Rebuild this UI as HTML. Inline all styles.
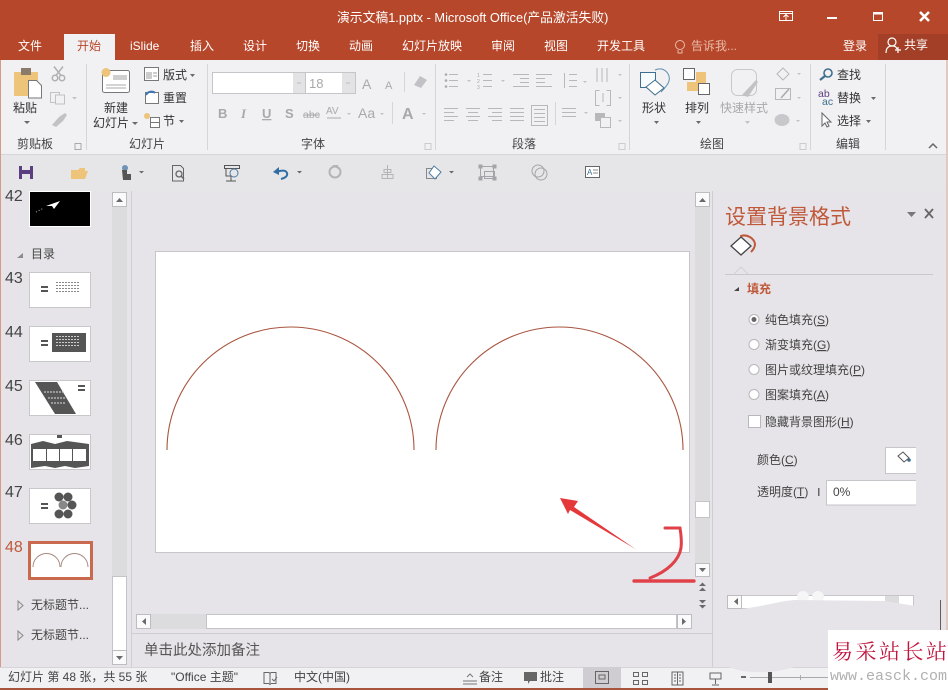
<!DOCTYPE html>
<html><head><meta charset="utf-8">
<style>
html,body{margin:0;padding:0;background:#e6e4e8;width:948px;height:690px;overflow:hidden}
svg{display:block}
text{font-family:"Liberation Sans","Noto Sans CJK SC",sans-serif;fill:#444;font-size:12px}
.w{fill:#fff}.g{fill:#a9a8ab}.d{fill:#555}
.l{stroke:#a5a4a8;stroke-width:1;fill:none}
.k{stroke:#7a797d;stroke-width:1;fill:none}
.b{fill:#fafafb;stroke:#bdbcc0;stroke-width:1}
.a{fill:#6a696d}
</style></head><body>
<svg width="948" height="690" viewBox="0 0 948 690" xmlns="http://www.w3.org/2000/svg">
<!-- backgrounds -->
<rect width="948" height="690" fill="#e6e4e8"/>
<rect width="948" height="60" fill="#b7472a"/>
<rect y="60" width="948" height="94" fill="#f1f0f3"/>
<rect y="154" width="948" height="1" fill="#d6d4d8"/>
<rect y="155" width="948" height="36" fill="#e6e5e8"/>
<rect x="64" y="34" width="51" height="26" fill="#f1f0f3"/>
<rect x="878" y="34" width="70" height="26" fill="#a33f26"/>
<rect x="0" y="60" width="1" height="630" fill="#d89a85"/>
<rect x="946" y="60" width="2" height="570" fill="#e2c9c0"/>
<!-- title -->
<text class="w" x="337" y="22" style="font-size:12.800px">演示文稿1.pptx - Microsoft Office(产品激活失败)</text>
<!-- window buttons -->
<g stroke="#fff" fill="none"><rect x="779.500" y="11.500" width="13" height="9"/><path d="M779 13.500h14M786 20v-5M783.500 17l2.500-2.500 2.500 2.500"/>
<path d="M827 18h10" stroke-width="2"/><rect x="873.500" y="12.500" width="9" height="8"/><path d="M873 13.500h10" stroke-width="2"/><path d="M920 12l9 9M929 12l-9 9" stroke-width="2.600"/></g>
<!-- tabs -->
<g style="font-size:12px">
<text class="w" x="18" y="50">文件</text><text x="77" y="50" style="fill:#b7472a">开始</text>
<text class="w" x="130" y="50">iSlide</text><text class="w" x="190" y="50">插入</text><text class="w" x="243" y="50">设计</text>
<text class="w" x="296" y="50">切换</text><text class="w" x="349" y="50">动画</text><text class="w" x="402" y="50">幻灯片放映</text>
<text class="w" x="491" y="50">审阅</text><text class="w" x="544" y="50">视图</text><text class="w" x="597" y="50">开发工具</text>
<text x="691" y="50" style="fill:#e8b9a8">告诉我...</text><text class="w" x="843" y="50">登录</text><text class="w" x="904" y="49">共享</text></g>
<g stroke="#e8b9a8" fill="none"><circle cx="680" cy="45" r="4.500"/><path d="M678 50v3h4v-3"/></g>
<g stroke="#fff" fill="none" stroke-width="1.200"><circle cx="892" cy="42" r="4"/><path d="M886 53c0-5 2-7 6-7s4 1 5 3M895 50h6M898 47v6"/></g>
<!-- clipboard -->
<rect x="14" y="72" width="24" height="24" fill="#eec47a"/><rect x="21" y="68" width="10" height="7" fill="#8a7a6a"/>
<path d="M28.500 80.500h8l5 5v12.500h-13z" fill="#fff" stroke="#777"/>
<text x="13" y="112" style="font-size:12px;fill:#333">粘贴</text><path d="M24 121h6l-3 3z" class="a"/>
<g fill="none" stroke="#b0afb3" stroke-width="1.500"><circle cx="55" cy="78" r="2.700"/><circle cx="62" cy="78" r="2.700"/><path d="M56 75.500l7-9M61 75.500l-7-9"/></g>
<g fill="none" stroke="#c2c1c5"><rect x="50.500" y="92.500" width="9" height="10"/><rect x="55.500" y="95" width="9" height="9" fill="#f1f0f3"/></g><path d="M72 97h5l-2.500 2.500z" fill="#c2c1c5"/>
<path d="M52 125l7-8 6-4 2 2-4 6-7 6z" fill="#c2c1c5"/>
<text x="17" y="148" style="font-size:12px">剪贴板</text><rect x="75" y="143.500" width="6" height="6" fill="none" stroke="#aaa"/>
<rect x="86" y="64" width="1" height="86" fill="#d6d4d8"/>
<!-- new slide -->
<rect x="102.500" y="70.500" width="27" height="22" rx="2" fill="#fff" stroke="#777"/><rect x="113" y="75" width="14" height="5" fill="#cfcfcf"/>
<path d="M106 85h20M106 88h20" stroke="#aaa"/><circle cx="106" cy="72.500" r="4.500" fill="#eec47a"/>
<text x="104" y="112" style="font-size:12px;fill:#333">新建</text><text x="93" y="127" style="font-size:12px;fill:#333">幻灯片</text><path d="M132 122h6l-3 3z" class="a"/>
<rect x="144.500" y="67.500" width="14" height="13" fill="#fff" stroke="#777"/><rect x="146" y="72" width="6" height="7" fill="#ccc"/><path d="M153 73h4M153 76h4" stroke="#999"/>
<text x="163" y="79" style="font-size:12px;fill:#333">版式</text><path d="M190 74h5l-2.500 3z" class="a"/>
<rect x="145.500" y="92.500" width="13" height="11" fill="#fff" stroke="#777"/><path d="M146 95c2-4 7-4 9-2" stroke="#3c78b5" stroke-width="2" fill="none"/>
<text x="163" y="102" style="font-size:12px;fill:#333">重置</text>
<rect x="150.500" y="117.500" width="9" height="10" fill="#fff" stroke="#777"/><path d="M150 122.500h10" stroke="#777"/><circle cx="147" cy="116" r="3" fill="#eec47a"/>
<text x="163" y="125" style="font-size:12px;fill:#333">节</text><path d="M179 120h5l-2.500 3z" class="a"/>
<text x="129" y="148" style="font-size:12px">幻灯片</text>
<rect x="207" y="64" width="1" height="86" fill="#d6d4d8"/>
<!-- font -->
<rect x="212.500" y="72.500" width="143" height="21" fill="#fff" stroke="#c6c5c9"/><rect x="293" y="73" width="13" height="20" fill="#e3e2e5"/><rect x="342" y="73" width="13" height="20" fill="#e3e2e5"/>
<rect x="305" y="73" width="1" height="20" fill="#c6c5c9"/>
<text x="309" y="88" style="font-size:13px" class="g">18</text><path d="M297 83h4M346 83h4" stroke="#bbb"/>
<text x="362" y="89" style="font-size:14px" class="g">A</text><text x="385" y="89" style="font-size:11px" class="g">A</text>
<rect x="404" y="72" width="1" height="20" fill="#d6d4d8"/><path d="M414 85l6-9 7 4-6 8z" fill="#c2c1c5"/>
<g><text x="218" y="118" class="g" style="font-weight:bold;font-size:13px">B</text><text x="241" y="118" class="g" style="font-style:italic;font-family:'Liberation Serif',serif;font-weight:bold;font-size:13px">I</text>
<text x="262" y="118" class="g" style="text-decoration:underline;font-weight:bold;font-size:13px">U</text><text x="285" y="118" class="g" style="font-weight:bold;font-size:13px">S</text>
<text x="303" y="118" class="g" style="font-size:10.500px;text-decoration:line-through">abc</text><text x="326" y="114" class="g" style="font-size:10px">AV</text>
<text x="358" y="118" class="g" style="font-size:14px">Aa</text></g><path d="M327 118h14" stroke="#aaa"/>
<rect x="392" y="102" width="1" height="22" fill="#d6d4d8"/><text x="402" y="119" style="font-size:16px;font-weight:bold" class="g">A</text>
<path d="M347 113h4l-2 2zM380 113h4l-2 2zM422 113h4l-2 2z" fill="#c2c1c5"/>
<text x="301" y="148" style="font-size:12px">字体</text><rect x="425" y="143.500" width="6" height="6" fill="none" stroke="#ccc"/>
<rect x="435" y="64" width="1" height="86" fill="#d6d4d8"/>
<!-- paragraph -->
<g stroke="#b8b7bb" fill="none">
<path d="M449 74.500h9M449 80.500h9M449 86.500h9M483 74.500h9M483 80.500h9M483 86.500h9"/>
<path d="M513 74.500h16M520 78.500h9M520 82.500h9M513 86.500h16M536 74.500h16M536 78.500h9M536 82.500h9M536 86.500h16"/>
<path d="M569 74.500h8M569 80.500h8M569 86.500h8M564.500 73v15"/>
<path d="M597 68v14M602 68v14M607 68v14"/>
<path d="M595.500 90.500h4M606.500 90.500h4v15h-4M599.500 105.500h-4v-15M603 93v9"/>
<path d="M444 108.500h14M444 112.500h10M444 116.500h14M444 120.500h10M466 108.500h14M468 112.500h10M466 116.500h14M468 120.500h10M488 108.500h14M492 112.500h10M488 116.500h14M492 120.500h10M510 108.500h14M510 112.500h14M510 116.500h14M510 120.500h14"/>
<path d="M531.500 105.500h16v20h-16zM534 109.500h11M534 113.500h11M534 117.500h11M534 121.500h11M562 108.500h14M562 112.500h14M562 116.500h14"/></g>
<rect x="555" y="102" width="1" height="23" fill="#d6d4d8"/>
<g fill="#a9a8ab"><circle cx="446" cy="74.500" r="1.300"/><circle cx="446" cy="80.500" r="1.300"/><circle cx="446" cy="86.500" r="1.300"/></g>
<text x="477" y="77" style="font-size:5px" class="g">1</text><text x="477" y="83" style="font-size:5px" class="g">2</text><text x="477" y="89" style="font-size:5px" class="g">3</text>
<path d="M467 80h4l-2 2zM501 80h4l-2 2zM583 81h4l-2 2zM618 74h4l-2 2zM618 97h4l-2 2zM618 120h4l-2 2zM584 112h4l-2 2z" fill="#c2c1c5"/>
<path d="M595 113h10v4h5v4h-15z" fill="#b8b7bb"/><rect x="600.500" y="117.500" width="10" height="10" fill="#f1f0f3" stroke="#b8b7bb"/>
<text x="512" y="148" style="font-size:12px">段落</text><rect x="619" y="143.500" width="6" height="6" fill="none" stroke="#ccc"/>
<rect x="629" y="64" width="1" height="86" fill="#d6d4d8"/>
<!-- draw -->
<path d="M655 70c9-4 16 4 14 11-1 4-6 9-8 11" fill="none" stroke="#5a8fb0"/><rect x="640.500" y="72.500" width="15" height="15" fill="#f7fbfd" stroke="#3f6f8e"/><path d="M655 80l9 8-9 7-9-8z" fill="#fff" stroke="#3f6f8e"/>
<text x="642" y="112" style="font-size:12px;fill:#333">形状</text><path d="M654 121h5l-2.500 3z" class="a"/>
<rect x="696" y="72" width="10" height="11" fill="#eec47a"/><rect x="683.500" y="68.500" width="11" height="11" fill="#fff" stroke="#666"/><rect x="687" y="82" width="11" height="9" fill="#eec47a"/><rect x="698.500" y="83.500" width="11" height="11" fill="#fff" stroke="#666"/>
<text x="685" y="112" style="font-size:12px;fill:#333">排列</text><path d="M696 121h5l-2.500 3z" class="a"/>
<rect x="731.500" y="69.500" width="25" height="26" rx="6" fill="none" stroke="#c8c7cb"/><path d="M742 95l14-15 2 2-10 15z" fill="#c2c1c5"/>
<text x="720" y="112" style="font-size:12px" class="g">快速样式</text><path d="M745 121h5l-2.500 3z" fill="#c2c1c5"/>
<path d="M777 74l6-6 6 6-6 6z" fill="none" stroke="#b8b7bb"/><path d="M775.500 88.500h15v11h-15z" fill="none" stroke="#b8b7bb"/><path d="M781 98l8-9" stroke="#aaa" stroke-width="1.500"/><ellipse cx="782" cy="120" rx="7.500" ry="6" fill="#c8c7cb"/>
<path d="M797 73h4l-2 2zM797 97h4l-2 2zM796 120h4l-2 2z" fill="#c2c1c5"/>
<text x="700" y="148" style="font-size:12px">绘图</text><rect x="800" y="143.500" width="6" height="6" fill="none" stroke="#ccc"/>
<rect x="810" y="64" width="1" height="86" fill="#d6d4d8"/>
<!-- edit -->
<circle cx="828" cy="73" r="4" fill="none" stroke="#3f6f8e" stroke-width="1.600"/><path d="M825 76l-5 4" stroke="#3f6f8e" stroke-width="2.200"/>
<text x="837" y="79" style="font-size:12px;fill:#333">查找</text>
<text x="818" y="97" style="font-size:10.500px;fill:#5b3f80">ab</text><text x="822" y="105" style="font-size:10.500px;fill:#3f6f8e">ac</text>
<text x="837" y="102" style="font-size:12px;fill:#333">替换</text><path d="M871 97h5l-2.500 3z" class="a"/>
<path d="M822 113v13l3-3 2 4 2-1-2-4h4z" fill="#fff" stroke="#666"/>
<text x="837" y="125" style="font-size:12px;fill:#333">选择</text><path d="M866 120h5l-2.500 3z" class="a"/>
<text x="836" y="148" style="font-size:12px">编辑</text><rect x="885" y="64" width="1" height="86" fill="#d6d4d8"/>
<path d="M929 148l4-4 4 4" fill="none" stroke="#666" stroke-width="1.500"/>
<!-- QAT -->
<rect x="19" y="166" width="14" height="13" fill="#5b3f80"/><rect x="22" y="166" width="8" height="4" fill="#e6e5e8"/><rect x="22" y="174" width="8" height="5" fill="#e6e5e8"/>
<path d="M71 170h7l2-2h5v3h3l-3 8H71z" fill="#eec47a"/>
<circle cx="125" cy="168" r="3" fill="#6f93b6"/><path d="M122 170h5v4h4v6h-8z" fill="#555"/><path d="M139 171h5l-2.500 2.500z" class="a"/>
<path d="M172.500 165.500h8l3 3v12.500h-11z" fill="none" stroke="#666"/><circle cx="179" cy="174" r="3" fill="none" stroke="#666" stroke-width="1.300"/><path d="M181 176l3 3" stroke="#666" stroke-width="1.500"/>
<rect x="224.500" y="165.500" width="15" height="3" fill="none" stroke="#555"/><path d="M226 168v8h5M231 176v5M226 181h10" stroke="#555" fill="none"/><circle cx="234" cy="173" r="4" fill="#e6e5e8" stroke="#4f7fa5"/>
<path d="M281 179c4-1 7-3 6-6-1-3-6-3-10-1" fill="none" stroke="#2f6ea5" stroke-width="2"/><path d="M273 172l6-5v8z" fill="#2f6ea5"/><path d="M297 171h5l-2.500 2.500z" class="a"/>
<circle cx="335" cy="172" r="5.500" fill="none" stroke="#b4b3b7" stroke-width="2"/><path d="M332 165h6v4z" fill="#b4b3b7"/>
<path d="M387.500 165v14M384 169.500h7v3h-7zM382 174.500h11v4h-11z" fill="none" stroke="#b4b3b7"/>
<rect x="426.500" y="168.500" width="10" height="10" fill="none" stroke="#888"/><path d="M434 166l7 6-6 7-6-6z" fill="#fff" stroke="#4f7fa5"/><path d="M449 171h5l-2.500 2.500z" class="a"/>
<g fill="none" stroke="#a5a4a8"><rect x="480.500" y="166.500" width="13" height="10"/><rect x="484.500" y="171.500" width="10" height="7"/><rect x="479" y="165" width="3" height="3" fill="#a5a4a8"/><rect x="493" y="165" width="3" height="3" fill="#a5a4a8"/><rect x="479" y="177" width="3" height="3" fill="#a5a4a8"/><rect x="493" y="177" width="3" height="3" fill="#a5a4a8"/>
<circle cx="538" cy="171" r="6"/><circle cx="541" cy="174" r="6"/></g>
<rect x="585.500" y="166.500" width="14" height="11" fill="#fff" stroke="#666"/><text x="587" y="175" style="font-size:8px;fill:#3f6f8e">A</text><path d="M593 170h5M593 173h5" stroke="#888"/>
<!-- left panel -->
<g><text x="5" y="201" style="font-size:16px">42</text><text x="5" y="283" style="font-size:16px">43</text><text x="5" y="337" style="font-size:16px">44</text><text x="5" y="391" style="font-size:16px">45</text><text x="5" y="445" style="font-size:16px">46</text><text x="5" y="497" style="font-size:16px">47</text><text x="5" y="552" style="font-size:16px;fill:#c0583a">48</text></g>
<rect x="29.500" y="191.500" width="61" height="35" fill="#000" stroke="#fff"/><path d="M46 206l14-5-6 8-2-3z" fill="#fff"/><path d="M36 212l8-4" stroke="#aaa" stroke-dasharray="1 2"/>
<path d="M17 258l6-5v5z" fill="#8a898d"/><text x="31" y="258" style="font-size:12px">目录</text>
<g fill="#fff" stroke="#c8c7cb"><rect x="29.500" y="272.500" width="61" height="35"/><rect x="29.500" y="326.500" width="61" height="35"/><rect x="29.500" y="380.500" width="61" height="35"/><rect x="29.500" y="434.500" width="61" height="35"/><rect x="29.500" y="488.500" width="61" height="35"/></g>
<g fill="#555">
<rect x="41" y="286" width="7" height="2"/><rect x="41" y="290" width="7" height="2"/><path d="M56 282.500h24M56 285.500h24M56 288.500h24M56 291.500h24" stroke="#888" stroke-dasharray="2 1"/>
<rect x="41" y="340" width="7" height="2"/><rect x="41" y="344" width="7" height="2"/><rect x="52" y="333" width="34" height="19"/><path d="M56 336.500h24M56 339.500h24M56 342.500h24M56 345.500h24" stroke="#ccc" stroke-dasharray="2 1"/>
<path d="M35 382h22l19 32H55z"/><path d="M44 392h20M48 398h18M51 403h15" stroke="#ddd" stroke-dasharray="2 1"/><rect x="78" y="385" width="7" height="2"/><rect x="78" y="389" width="7" height="2"/>
<path d="M31 444l12-3 12 3 12-3 22 3v22l-14 2-10-2-10 2-10-2-14 2z"/><rect x="33" y="449" width="13" height="12" fill="#fff"/><rect x="47" y="449" width="12" height="12" fill="#fff"/><rect x="60" y="449" width="12" height="12" fill="#fff"/><rect x="73" y="449" width="13" height="12" fill="#fff"/><rect x="57" y="435" width="5" height="3"/>
<rect x="41" y="503" width="7" height="2"/><rect x="41" y="507" width="7" height="2"/><circle cx="59" cy="497" r="4.500"/><circle cx="68" cy="497" r="4.500"/><circle cx="63" cy="505" r="4.500" fill="#888"/><circle cx="72" cy="505" r="4.500"/><circle cx="59" cy="514" r="4.500"/><circle cx="68" cy="514" r="4.500"/></g>
<rect x="29.500" y="542.500" width="62" height="36" fill="#fff" stroke="#c96a4f" stroke-width="3"/>
<path d="M33 567a13 13 0 0 1 27 0M61 567a13 13 0 0 1 27 0" fill="none" stroke="#a58a80"/>
<path d="M18 601v9l5-4.500z" fill="none" stroke="#888"/><path d="M18 631v9l5-4.500z" fill="none" stroke="#888"/>
<text x="31" y="609" style="font-size:12px">无标题节...</text><text x="31" y="639" style="font-size:12px">无标题节...</text>
<rect x="112" y="192" width="15" height="473" fill="#dcdbde"/><rect x="112.500" y="192.500" width="14" height="14" class="b"/><path d="M116 202h7l-3.500-4z" class="a"/>
<rect x="112.500" y="576.500" width="14" height="74" fill="#fff" stroke="#c4c3c7"/><rect x="112.500" y="650.500" width="14" height="14" class="b"/><path d="M116 656h7l-3.500 4z" class="a"/>
<rect x="131" y="191" width="1" height="476" fill="#d0ced2"/>
<!-- slide -->
<rect x="155.500" y="251.500" width="534" height="301" fill="#fff" stroke="#c6c5c9"/>
<path d="M167 450A123.500 123 0 0 1 414 450M436 450A123.500 123 0 0 1 683 450" fill="none" stroke="#a8553f" stroke-width="1.100"/>
<!-- arrow -->
<path d="M560 498L578 501 574 507 637 550 570 510 568 514z" fill="#e5383b"/>
<path d="M665 528h15q2 12 1 20c-2 12-13 23-31 30" fill="none" stroke="#e04048" stroke-width="3" stroke-linecap="round"/>
<path d="M634 581h60" stroke="#e04048" stroke-width="3.200" stroke-linecap="round"/>
<!-- v scrollbar -->
<rect x="695" y="192" width="15" height="385" fill="#dcdbde"/><rect x="695.500" y="192.500" width="14" height="14" class="b"/><path d="M699 202h7l-3.500-4z" class="a"/>
<rect x="695.500" y="501.500" width="14" height="16" fill="#fff" stroke="#c4c3c7"/><rect x="695.500" y="563.500" width="14" height="13" class="b"/><path d="M699 568h7l-3.500 4z" class="a"/>
<path d="M634 581h60" stroke="#e04048" stroke-width="3.200" stroke-linecap="round"/>
<path d="M699 586l3.500-3.500 3.500 3.500zM699 591l3.500-3.500 3.500 3.500zM699 600l3.500 3.500 3.500-3.500zM699 605l3.500 3.500 3.500-3.500z" class="a"/>
<!-- h scrollbar -->
<rect x="136" y="614" width="556" height="15" fill="#dcdbde"/><rect x="136.500" y="614.500" width="14" height="14" class="b"/><path d="M146 618v7l-4-3.500z" class="a"/>
<rect x="206.500" y="614.500" width="470" height="14" fill="#fff" stroke="#c4c3c7"/><rect x="677.500" y="614.500" width="14" height="14" class="b"/><path d="M682 618v7l4-3.500z" class="a"/>
<rect x="132" y="633" width="580" height="1" fill="#cfcdd1"/>
<text x="144" y="655" style="font-size:14.500px;fill:#555">单击此处添加备注</text>
<rect x="712" y="191" width="1" height="476" fill="#cfcdd1"/>
<!-- right pane -->
<text x="725" y="224" style="font-size:21px;fill:#c0583a">设置背景格式</text>
<path d="M907 212h9l-4.500 5z" fill="#777"/><path d="M925 209l8 9M933 209l-8 9" stroke="#666" stroke-width="1.800"/>
<path d="M741 237l10 9-10 9-10-9z" fill="#fff" stroke="#444" stroke-width="1.300"/><path d="M741 237v-1c6-2 13 2 14 8 0 3-2 6-4 8" fill="none" stroke="#c0583a" stroke-width="2"/>
<path d="M725 274.500h208" stroke="#c9c8cb"/><path d="M734 274l7-7 7 7" fill="#e6e4e8" stroke="#d2d1d5"/>
<path d="M734 291l5-4v4z" fill="#444"/><text x="747" y="293" style="font-size:12px;fill:#c0583a;font-weight:bold">填充</text>
<g fill="#fff" stroke="#b8b7bb"><circle cx="754" cy="319.500" r="5"/><circle cx="754" cy="344.500" r="5"/><circle cx="754" cy="369.500" r="5"/><circle cx="754" cy="394.500" r="5"/><rect x="748.500" y="415.500" width="12" height="12"/></g><circle cx="754" cy="319.500" r="2.500" fill="#666"/>
<g><text x="765" y="324">纯色填充(<tspan text-decoration="underline">S</tspan>)</text><text x="765" y="349">渐变填充(<tspan text-decoration="underline">G</tspan>)</text><text x="765" y="374">图片或纹理填充(<tspan text-decoration="underline">P</tspan>)</text><text x="765" y="399">图案填充(<tspan text-decoration="underline">A</tspan>)</text><text x="765" y="426">隐藏背景图形(<tspan text-decoration="underline">H</tspan>)</text>
<text x="757" y="464">颜色(<tspan text-decoration="underline">C</tspan>)</text><text x="757" y="496">透明度(<tspan text-decoration="underline">T</tspan>)</text></g>
<path d="M916 447.500h-30.500v26h30.500" fill="#fff" stroke="#c6c5c9"/><path d="M898 456l5-4 6 6-5 4z" fill="#fff" stroke="#555"/><circle cx="909" cy="460" r="1.800" fill="#3f6f8e"/>
<rect x="818" y="488" width="1.500" height="8" fill="#666"/>
<path d="M916 480.500h-89.500v24.500h89.500" fill="#fff" stroke="#c6c5c9"/>
<text x="833" y="496" style="font-size:12px">0%</text>
<!-- pane scrollbar -->
<rect x="727.500" y="595.500" width="186" height="13" fill="#fff" stroke="#c6c5c9"/><rect x="727.500" y="595.500" width="14" height="13" class="b"/><path d="M738 598v7l-4-3.500z" class="a"/><rect x="885" y="596" width="14" height="12" fill="#dcdbde"/>
<circle cx="803" cy="597" r="6" fill="#f6f6f7"/><circle cx="818" cy="597" r="6" fill="#f6f6f7"/>
<path d="M742 609C770 605 780 601 795 600L885 601 915 606V612H742z" fill="#e6e4e8"/>
<rect x="940" y="600" width="1" height="30" fill="#6a5a55"/>
<!-- status -->
<rect y="667" width="948" height="21" fill="#f1f0f3"/><rect y="667" width="948" height="1" fill="#d6d4d8"/><rect y="688" width="948" height="2" fill="#a8533b"/>
<path d="M725 665C740 674 772 675 797 666z" fill="#e6e4e8"/>
<g><text x="8" y="681">幻灯片 第 48 张，共 55 张</text><text x="171" y="681">"Office 主题"</text><text x="294" y="681">中文(中国)</text><text x="479" y="681">备注</text><text x="540" y="681">批注</text></g>
<path d="M264 672.500h5l1 1 1-1h5v11h-5l-1 1-1-1h-5zM270 674v9" fill="none" stroke="#666"/><path d="M272 679l2 2 3-4" fill="none" stroke="#666"/>
<path d="M463 681h14M463 684h14M467 677l3-3 3 3" fill="none" stroke="#777"/>
<path d="M524 672h13v9h-7l-2 3v-3h-4z" fill="#666"/>
<rect x="583" y="667" width="38" height="21" fill="#cfcdd1"/><rect x="595.500" y="671.500" width="13" height="12" fill="none" stroke="#666"/><path d="M599 675h6v4h-6z" fill="none" stroke="#666"/>
<g fill="none" stroke="#666"><rect x="633.500" y="672.500" width="5" height="4"/><rect x="642.500" y="672.500" width="5" height="4"/><rect x="633.500" y="680.500" width="5" height="4"/><rect x="642.500" y="680.500" width="5" height="4"/>
<path d="M672 672h11v13h-11zM677.500 672v13M674 675h2M674 678h2M674 681h2M679 675h2M679 678h2M679 681h2"/>
<path d="M710 673h11v6h-11zM712 673h7M715.500 679v5M712 685h7"/></g>
<rect x="741" y="676" width="5" height="2" fill="#666"/><rect x="750" y="677" width="78" height="1" fill="#aaa"/><rect x="800" y="675" width="1" height="5" fill="#aaa"/><rect x="768" y="672" width="4" height="11" fill="#555"/>
<!-- watermark -->
<rect x="828" y="630" width="120" height="60" fill="#fff"/>
<text x="832" y="659" style="font-size:21px;font-family:'Liberation Serif','Noto Serif CJK SC',serif;fill:#c0143c" letter-spacing="2.500">易采站长站</text>
<text x="830" y="680" style="font-size:15px;font-family:'Liberation Mono',monospace;fill:#b0b0b0">www.easck.com</text>
</svg>
</body></html>
